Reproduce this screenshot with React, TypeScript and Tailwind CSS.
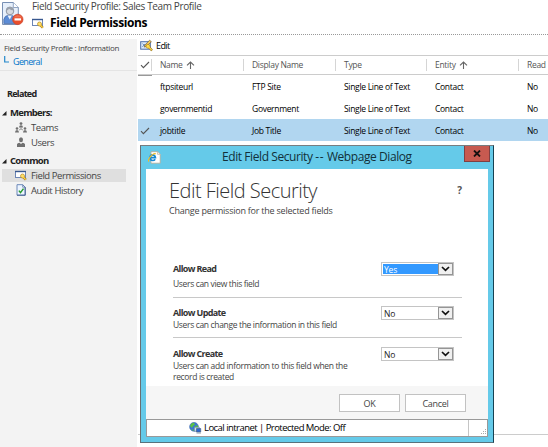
import React from "react";

const rows = [
  { name: "ftpsiteurl", display: "FTP Site", selected: false },
  { name: "governmentid", display: "Government", selected: false },
  { name: "jobtitle", display: "Job Title", selected: true },
];

function Check() {
  return (
    <svg width="10" height="8" viewBox="0 0 10 8" fill="none" stroke="#555" strokeWidth="1.1">
      <path d="M1 4.2 3.4 6.6 9 1" />
    </svg>
  );
}

function SortArrow() {
  return (
    <svg className="ml-[3px]" width="9" height="8" viewBox="0 0 9 8" fill="none" stroke="#666" strokeWidth="1.1">
      <path d="M4.5 8V1M1 4.4 4.5 1 8 4.4" />
    </svg>
  );
}

function FieldIcon() {
  return (
    <svg width="12" height="11" viewBox="0 0 12 11">
      <rect x=".5" y="1.5" width="10" height="6" fill="#fff" stroke="#6d86b5" />
      <path d="M0 1.5H11" stroke="#38588f" strokeWidth="1.4" />
      <path d="m7.8 6.5 3 3.3" stroke="#9a7418" strokeWidth="2.4" />
      <circle cx="7.5" cy="6" r="2" fill="#ffe06a" stroke="#b98a1e" strokeWidth=".7" />
      <path d="m8.3 7 2.4 2.6" stroke="#ffd44a" strokeWidth="1.3" />
    </svg>
  );
}

function EditIcon() {
  return (
    <svg width="13" height="13" viewBox="0 0 13 13">
      <rect x=".7" y="2.7" width="9.6" height="7.5" fill="#dceafa" stroke="#4a6da8" />
      <path d="m2.4 4.5 3 3M2.4 7.8 5 5" stroke="#4b75a8" strokeWidth=".8" />
      <path d="m4.8 6.2 4.8-5 1.8 1.6-5 4.6-2.2.7z" fill="#f4ca58" stroke="#6b5942" strokeWidth=".7" />
      <path d="m8 7 4 4.4" stroke="#9a7418" strokeWidth="2.3" />
      <circle cx="8" cy="7.3" r="2" fill="#ffdb48" stroke="#a6790e" strokeWidth=".6" />
      <path d="m8.8 8 2.9 3.1" stroke="#ffdb48" strokeWidth="1.1" />
    </svg>
  );
}

function ProfileIcon() {
  return (
    <svg width="23" height="25" viewBox="0 0 23 25">
      <path d="M1.5.5h10.8l5 5v17H1.5z" fill="#e6effb" stroke="#7890b5" />
      <path d="M12.3.5v5h5" fill="#fff" stroke="#7890b5" strokeWidth=".8" />
      <path d="M2.8 21.5v-4q.6-4 5.2-4.5 5.6.2 6.7 4.5v4z" fill="#5c8cd6" stroke="#385d9b" strokeWidth=".6" />
      <path d="m6.5 13.5 2.3 4 2-4z" fill="#eef4fb" />
      <circle cx="9" cy="9" r="3.8" fill="#d6dae0" stroke="#7c838f" strokeWidth=".8" />
      <path d="M5.2 8.8Q5 4.5 9 4.7q3.8.2 3.8 3.8-2.8.1-4.8-1.7Q7.3 8.2 5.2 8.8z" fill="#98a0ac" />
      <circle cx="16.8" cy="17.4" r="5.2" fill="#e94e2b" stroke="#c9412a" strokeWidth=".7" />
      <path d="M12.4 15.6q4.4-5 8.8 0z" fill="#f58b69" opacity=".6" />
      <path d="M13.5 17.4h6.6" stroke="#fff" strokeWidth="2.2" />
    </svg>
  );
}

function TeamsIcon() {
  return (
    <svg width="12" height="11" viewBox="0 0 12 11" fill="#707070">
      <circle cx="6" cy="1.6" r="1.4" />
      <path d="M4 5.5q0-2.3 2-2.3t2 2.3zM0 10.5q0-2.5 2-2.5t2 2.5zM8 10.5q0-2.5 2-2.5t2 2.5z" />
      <circle cx="2" cy="6.5" r="1.3" />
      <circle cx="10" cy="6.5" r="1.3" />
      <path d="M6 5.2V7M4 8l2-1 2 1" fill="none" stroke="#888" strokeWidth=".8" />
    </svg>
  );
}

function UserIcon() {
  return (
    <svg width="12" height="11" viewBox="0 0 12 11" fill="#707070">
      <ellipse cx="6" cy="2.7" rx="2" ry="2.5" />
      <path d="M2 10V7.3Q2.4 5.8 4.5 5.8L6 7l1.5-1.2q2.1 0 2.5 1.5V10z" />
    </svg>
  );
}

function AuditIcon() {
  return (
    <svg width="12" height="12" viewBox="0 0 12 12">
      <path d="M2 .7h5.7l2.5 2.5v8H2z" fill="#edf5ff" stroke="#6c88b8" />
      <path d="M10.2 3.2v8H2" fill="none" stroke="#3d5a8c" strokeWidth=".9" />
      <path d="M7.7.7v2.5h2.5" fill="none" stroke="#526d9c" strokeWidth=".7" />
      <path d="m3.9 6.6 1.6 2 3-4" fill="none" stroke="#269b2c" strokeWidth="1.5" />
    </svg>
  );
}

function IeIcon() {
  return (
    <svg width="13" height="13" viewBox="0 0 13 13">
      <path d="M3 .7h6.7l2.5 2.5v9H3z" fill="#fff" stroke="#b1a995" strokeWidth=".8" />
      <path d="M9.5.7v2.7h2.7" fill="#eee" stroke="#b1a995" strokeWidth=".6" />
      <path d="M2 6.7h5.4Q7 3.8 4.7 3.8 2 4 2 6.7q.2 2.8 2.7 2.8 1.6 0 2.5-1.2" fill="none" stroke="#1689d4" strokeWidth="1.7" />
      <path d="M1 10.4Q-.6 9.2 2.8 5.2 6.4 1.4 7.9 3" fill="none" stroke="#f1bf25" strokeWidth="1.2" />
    </svg>
  );
}

function GlobeIcon() {
  return (
    <svg width="13" height="12" viewBox="0 0 13 12">
      <circle cx="5" cy="4.8" r="4.4" fill="#3a76d8" stroke="#3c68ad" strokeWidth=".6" />
      <path d="M1 4q.8-3 4-3.2l1 1.8-2 1.5-1 2zM6 4l3-.8.2 3-2 1.3L5 6zM2 7l3 1-.7 1z" fill="#5bc344" />
      <path d="M5.3 5.2h5v4h-5z" fill="#c9e2f3" stroke="#5c7894" strokeWidth=".6" />
      <path d="M7.5 6.5h4.2v3.5H7.5z" fill="#2b67d2" stroke="#4a6287" strokeWidth=".7" />
      <path d="M7.5 11H12" stroke="#8fa0ae" />
    </svg>
  );
}

function NavItem({ icon, active = false, className, children }: { icon: React.ReactNode; active?: boolean; className: string; children: React.ReactNode }) {
  return (
    <div className={`ml-[2px] flex w-[124px] items-center pl-[13px] ${active ? "bg-[#dfdfdf]" : ""} ${className}`}>
      {icon}
      <span className="ml-[4px] text-[9.5px] leading-[11px] tracking-[-0.42px] text-[#444]">{children}</span>
    </div>
  );
}

function Group({ children }: { children: React.ReactNode }) {
  return (
    <div className="flex h-[12px] items-center pl-[2px]">
      <svg width="5" height="5" viewBox="0 0 5 5"><path d="M4.5 0v4.5H0z" fill="#222" /></svg>
      <span className="ml-[3px] text-[9.5px] font-bold leading-[12px] tracking-[-0.7px] text-[#222]">{children}</span>
    </div>
  );
}

function Select({ value, focused = false }: { value: string; focused?: boolean }) {
  return (
    <div className="flex h-[14px] w-[73px] shrink-0 border border-[#c4c4c4] bg-white">
      <div className={`flex flex-1 items-center text-[8.5px] leading-[11px] tracking-[-0.2px] ${focused ? "m-px mr-0 bg-[#3399ff] pl-px text-white" : "pl-[2px] text-[#222]"}`}>{value}</div>
      <div className="flex w-[15px] items-center justify-center border border-[#959595] bg-[#f0f0f0]">
        <svg width="9" height="6" viewBox="0 0 9 6" fill="none" stroke="#111" strokeWidth="1.7"><path d="m1 1 3.5 3.4L8 1" /></svg>
      </div>
    </div>
  );
}

function Permission({ title, description, value, focused = false, className, gap }: { title: string; description: React.ReactNode; value: string; focused?: boolean; className: string; gap: string }) {
  return (
    <div className={`flex justify-between pr-[8px] ${className}`}>
      <div>
        <div className="text-[9px] font-bold leading-[12px] tracking-[-0.64px] text-[#333]">{title}</div>
        <div className={`whitespace-nowrap text-[8.5px] tracking-[-0.34px] text-[#444] ${gap}`}>{description}</div>
      </div>
      <div className="-mt-px"><Select value={value} focused={focused} /></div>
    </div>
  );
}

function EditDialog() {
  return (
    <section className="absolute left-[140px] top-[145px] flex h-[298px] w-[354px] flex-col border border-b-[#59727c] border-l-[#696f72] border-r-[#164252] border-t-[#777d80] bg-[#65cae9] px-[5px] pb-[5px]">
      <header className="flex h-[23px] shrink-0">
        <div className="ml-[2px] mt-[5px]"><IeIcon /></div>
        <h2 className="ml-[61px] mt-[2px] w-[195px] whitespace-nowrap text-[12px] leading-[18px] tracking-[-0.42px] text-[#123039]">
          Edit Field Security <span className="tracking-[0.6px]">--</span> Webpage Dialog
        </h2>
        <button className="-mr-[2px] ml-auto flex h-[16px] w-[26px] items-center justify-center border border-t-0 border-[#813f42] bg-[#c75a50]">
          <svg width="8" height="7" viewBox="0 0 8 7" stroke="#151010" strokeWidth="1.8"><path d="m1 .5 6 6m0-6-6 6" /></svg>
        </button>
      </header>
      <div className="flex min-h-0 flex-1 flex-col bg-white">
        <div className="flex h-[83px] justify-between pl-[23px] pr-[26px]">
          <div className="pt-[10px]">
            <h1 className="whitespace-nowrap text-[20px] font-light leading-[24px] tracking-[-0.52px] text-[#333]">Edit Field Security</h1>
            <p className="mt-[2px] whitespace-nowrap text-[9px] leading-[12px] tracking-[-0.23px] text-[#444]">Change permission for the selected fields</p>
          </div>
          <span className="mt-[15px] text-[10px] font-bold leading-[12px] text-[#555]">?</span>
        </div>
        <div className="ml-[27px] w-[289px]">
          <Permission title="Allow Read" description="Users can view this field" value="Yes" focused className="h-[46px] border-b border-[#c8c8c8] pt-[11px]" gap="mt-[3px] leading-[11px]" />
          <Permission title="Allow Update" description="Users can change the information in this field" value="No" className="h-[40px] border-b border-[#c8c8c8] pt-[9px]" gap="leading-[11px]" />
          <Permission title="Allow Create" description={<>Users can add information to this field when the<br />record is created</>} value="No" className="h-[48px] pt-[10px]" gap="leading-[11px]" />
        </div>
        <div className="flex h-[33px] shrink-0 items-start justify-end gap-[5px] bg-[#f6f6f6] pr-[22px] pt-[8px]">
          <button className="h-[18px] w-[61px] border border-[#c2c2c2] bg-white text-[9px] leading-[15px] tracking-[-0.3px] text-[#444]">OK</button>
          <button className="h-[18px] w-[61px] border border-[#c2c2c2] bg-white text-[9px] leading-[15px] tracking-[-0.3px] text-[#444]">Cancel</button>
        </div>
        <footer className="flex flex-1 items-center border border-[#999] bg-white">
          <div className="ml-[42px] flex h-full items-center"><GlobeIcon /></div>
          <span className="ml-[2px] whitespace-nowrap text-[9.5px] leading-[14px] tracking-[-0.54px] text-black">Local intranet | Protected Mode: Off</span>
          <div className="ml-auto flex h-full w-[19px] items-end justify-end border-l border-l-[#c5c5c5]">
            <svg width="7" height="7" viewBox="0 0 7 7" fill="#aaa"><path d="M5 0h1v1H5zM3 2h1v1H3zM5 2h1v1H5zM1 4h1v1H1zM3 4h1v1H3zM5 4h1v1H5z" /></svg>
          </div>
        </footer>
      </div>
    </section>
  );
}

export default function App() {
  return (
    <div className="relative flex h-[447px] w-[548px] flex-col overflow-hidden bg-white font-['Open_Sans','Noto_Sans',sans-serif]">
      <header className="flex h-[35px] shrink-0 border-b border-dotted border-[#999] pl-px">
        <div className="pt-[2px]"><ProfileIcon /></div>
        <div className="ml-[8px]">
          <div className="h-[13px] whitespace-nowrap text-[10px] leading-[12px] tracking-[-0.37px] text-[#444]">Field Security Profile: Sales Team Profile</div>
          <div className="flex h-[18px] items-center">
            <div className="mt-[2px]"><FieldIcon /></div>
            <h1 className="ml-[6px] whitespace-nowrap text-[12px] font-bold leading-[17px] tracking-[-0.42px] text-black">Field Permissions</h1>
          </div>
        </div>
      </header>
      <div className="flex min-h-0 flex-1 pt-[4px]">
        <aside className="w-[137px] shrink-0 bg-[#f3f3f3]">
          <div className="h-[32px] border-b border-[#e4e4e4] pl-[4px] pt-[3px]">
            <div className="whitespace-nowrap text-[8px] leading-[11px] tracking-[-0.31px] text-[#444]">Field Security Profile : Information</div>
            <div className="mt-[3px] flex">
              <svg width="5" height="8" viewBox="0 0 5 8" fill="none" stroke="#2388cb" strokeWidth="1.2"><path d="M.7 0v6H5" /></svg>
              <a className="ml-[4px] text-[9px] leading-[12px] tracking-[-0.65px] text-[#0074c8]">General</a>
            </div>
          </div>
          <div className="mt-[17px] pl-[7px] text-[9px] font-bold leading-[12px] tracking-[-0.7px] text-[#222]">Related</div>
          <div className="mt-[7px]"><Group>Members:</Group></div>
          <NavItem icon={<TeamsIcon />} className="mt-px h-[14px]">Teams</NavItem>
          <NavItem icon={<UserIcon />} className="mt-px h-[14px]">Users</NavItem>
          <div className="mt-[6px]"><Group>Common</Group></div>
          <NavItem icon={<FieldIcon />} active className="mt-[2px] h-[13px]">Field Permissions</NavItem>
          <NavItem icon={<AuditIcon />} className="mt-px h-[14px]">Audit History</NavItem>
        </aside>
        <main className="flex flex-1 flex-col pl-px">
          <div className="flex h-[17px] items-start border-b border-[#ccc] pl-[2px]">
            <EditIcon />
            <span className="ml-[3px] text-[9px] leading-[13px] tracking-[-0.6px] text-black">Edit</span>
          </div>
          <div className="grid h-[19px] grid-cols-[13px_92px_92px_91px_92px_30px] items-center border-b border-[#ccc] text-[8.5px] leading-[12px] tracking-[-0.3px] text-[#555]">
            <div className="flex h-full items-center pl-[2px]"><Check /></div>
            {["Name", "Display Name", "Type", "Entity", "Read"].map((label) => (
              <div key={label} className="flex h-[12px] items-center whitespace-nowrap border-l border-l-[#d5d5d5] pl-[8px]">
                {label}{(label === "Name" || label === "Entity") && <SortArrow />}
              </div>
            ))}
          </div>
          <div className="h-px w-[14px] bg-[#999]" />
          {rows.map((row) => (
            <div key={row.name} className={`grid h-[22px] shrink-0 grid-cols-[13px_92px_92px_91px_92px_30px] items-center whitespace-nowrap text-[8.5px] leading-[12px] tracking-[-0.3px] text-black ${row.selected ? "-mt-px bg-[#b1d6f0] pt-[2px]" : ""}`}>
              <div className="pl-[2px]">{row.selected && <Check />}</div>
              <div className="pl-[9px]">{row.name}</div>
              <div className="pl-[9px]">{row.display}</div>
              <div className="pl-[9px]">Single Line of Text</div>
              <div className="pl-[9px]">Contact</div>
              <div className="pl-[9px]">No</div>
            </div>
          ))}
          <div className="mb-[12px] mt-auto h-px bg-[#ccc]" />
        </main>
      </div>
      <EditDialog />
    </div>
  );
}
